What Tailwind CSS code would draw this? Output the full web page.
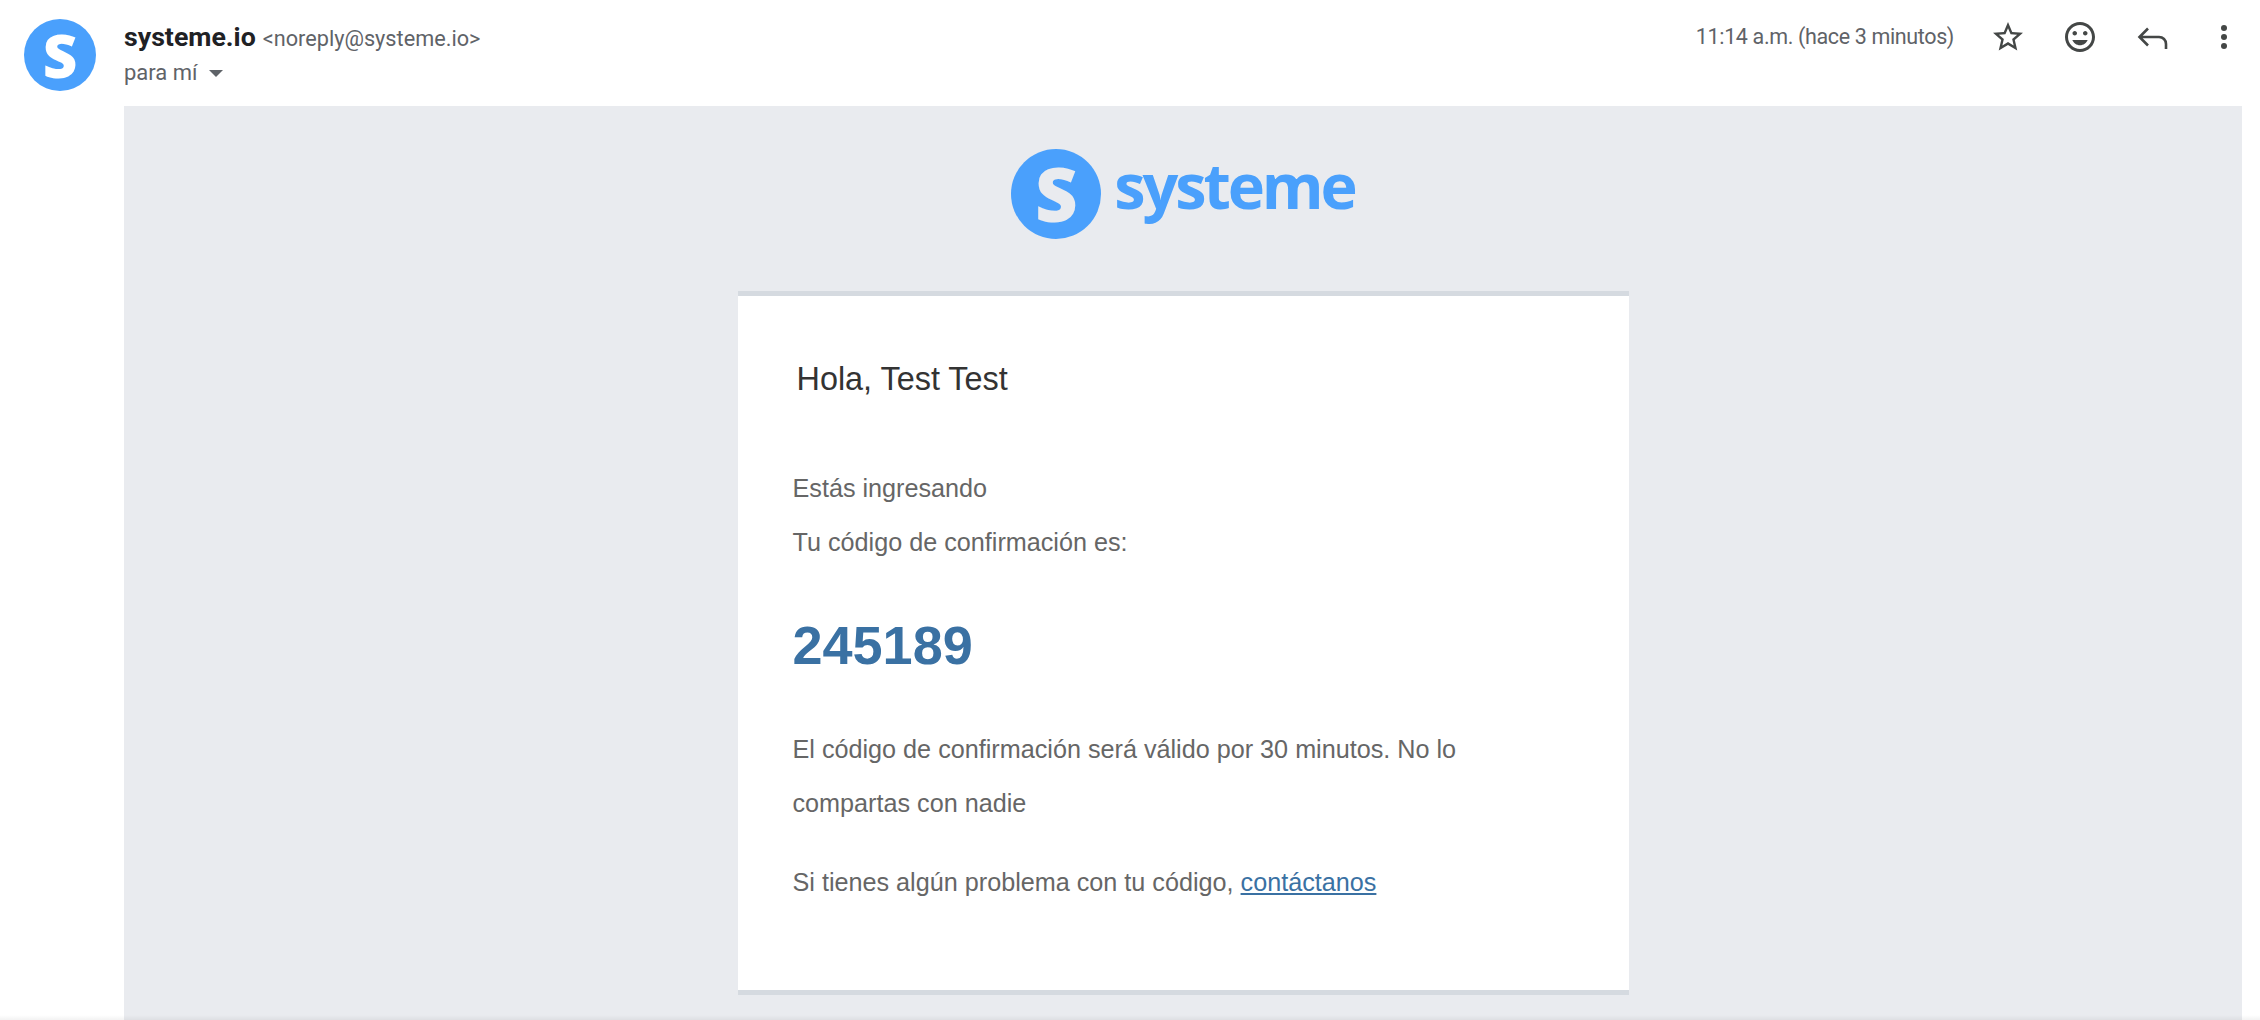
<!DOCTYPE html>
<html lang="es">
<head>
    <meta charset="UTF-8">
    <meta name="viewport" content="width=device-width, initial-scale=1.0">
    <title>Tu código de confirmación</title>
    <script src="https://cdn.jsdelivr.net/npm/@tailwindcss/browser@4"></script>
</head>
<body class="relative bg-white h-[1020px] overflow-hidden font-['Roboto',sans-serif]">
    <!-- Header -->
    <header class="h-[106px] flex">
        <div class="w-[124px] pl-[24px] pt-[19px] shrink-0">
            <div class="w-[72px] h-[72px] rounded-full bg-[#4aa0fc] flex items-center justify-center">
                <span class="text-white font-extrabold text-[60px] leading-none font-['Open_Sans',sans-serif]">S</span>
            </div>
        </div>
        <div class="pt-[22px] flex-1">
            <div class="flex items-baseline h-[30px] leading-[30px]">
                <span class="text-[26.7px] font-bold text-[#202124]">systeme.io</span>
                <span class="text-[21.7px] text-[#5f6368] ml-[7px]">&lt;noreply@systeme.io&gt;</span>
            </div>
            <div class="flex items-center h-[30px] mt-[5px] text-[22px] text-[#5f6368]">
                para mí
                <svg class="ml-[11px] mt-[2px]" width="14" height="7" viewBox="0 0 14 7"><path d="M0 0h14L7 7z" fill="#5f6368"/></svg>
            </div>
        </div>
        <div class="flex items-start pt-[22px] pr-[29px]">
            <span class="text-[21.5px] leading-[30px] text-[#5f6368] tracking-[-0.36px] mr-[36px]">11:14 a.m. (hace 3 minutos)</span>
            <div class="flex items-center -mt-[3px]">
                <svg width="36" height="36" viewBox="0 0 24 24" fill="#444746"><path d="M22 9.24l-7.19-.62L12 2 9.19 8.63 2 9.24l5.46 4.73L5.82 21 12 17.27 18.18 21l-1.63-7.03L22 9.24zM12 15.4l-3.76 2.27 1-4.28-3.32-2.88 4.38-.38L12 6.1l1.71 4.04 4.38.38-3.32 2.88 1 4.28L12 15.4z"/></svg>
                <svg class="ml-[36px]" width="36" height="36" viewBox="0 0 24 24" fill="#444746"><path d="M11.99 2C6.47 2 2 6.48 2 12s4.47 10 9.99 10C17.52 22 22 17.52 22 12S17.52 2 11.99 2zM12 20c-4.42 0-8-3.58-8-8s3.58-8 8-8 8 3.58 8 8-3.58 8-8 8zm3.5-9c.83 0 1.5-.67 1.5-1.5S16.33 8 15.5 8 14 8.67 14 9.5s.67 1.5 1.5 1.5zm-7 0c.83 0 1.5-.67 1.5-1.5S9.33 8 8.5 8 7 8.67 7 9.5 7.67 11 8.5 11zm3.5 6.5c2.33 0 4.31-1.46 5.11-3.5H6.89c.8 2.04 2.78 3.5 5.11 3.5z"/></svg>
                <svg class="ml-[36px]" width="36" height="36" viewBox="0 0 36 36" fill="none" stroke="#444746" stroke-width="2.6"><path d="M14 9.5L5.5 18 14 26.5M5.5 18H25c4 0 7 3 7 7v5"/></svg>
                <svg class="ml-[47px]" width="14" height="36" viewBox="0 0 14 36" fill="#444746"><circle cx="7" cy="9" r="3"/><circle cx="7" cy="18" r="3"/><circle cx="7" cy="27" r="3"/></svg>
            </div>
        </div>
    </header>

    <!-- Mail body -->
    <main class="ml-[124px] mr-[18px] h-[914px] bg-[#e9ebef]">
        <div class="pt-[43px] h-[185px] flex justify-center">
            <div class="flex items-start h-[90px]">
                <div class="w-[90px] h-[90px] rounded-full bg-[#4aa0fc] flex items-center justify-center">
                    <span class="text-[#e9ebef] font-extrabold text-[74px] leading-none font-['Open_Sans',sans-serif]">S</span>
                </div>
                <span class="ml-[13px] -mt-[9px] text-[#4aa0fc] font-bold text-[63px] leading-[90px] tracking-[-3.1px] font-['Open_Sans',sans-serif]">systeme</span>
            </div>
        </div>

        <!-- Card -->
        <div class="w-[891px] mx-auto bg-white border-y-[5px] border-[#d5dae0] font-['Liberation_Sans',sans-serif] pl-[55px] pr-[100px] pt-[63px] pb-[81px]">
            <h1 class="pl-[4px] text-[32.4px] leading-[40px] text-[#333333]">Hola, Test Test</h1>
            <p class="mt-[62px] text-[25.2px] leading-[54px] text-[#666666]">Estás ingresando</p>
            <p class="text-[25.2px] leading-[54px] text-[#666666]">Tu código de confirmación es:</p>
            <p class="mt-[46px] text-[54px] leading-[60px] font-bold text-[#3a71a3]">245189</p>
            <p class="mt-[47px] text-[25.2px] leading-[54px] text-[#666666]">El código de confirmación será válido por 30 minutos. No lo compartas con nadie</p>
            <p class="mt-[25px] text-[25.2px] leading-[54px] text-[#666666]">Si tienes algún problema con tu código, <a href="#" class="text-[#3a71a3] underline">contáctanos</a></p>
        </div>
    </main>

    <!-- Window edge shadow -->
    <div class="absolute left-0 right-0 bottom-0 h-[5px] bg-linear-to-b from-transparent to-black/5"></div>
</body>
</html>
